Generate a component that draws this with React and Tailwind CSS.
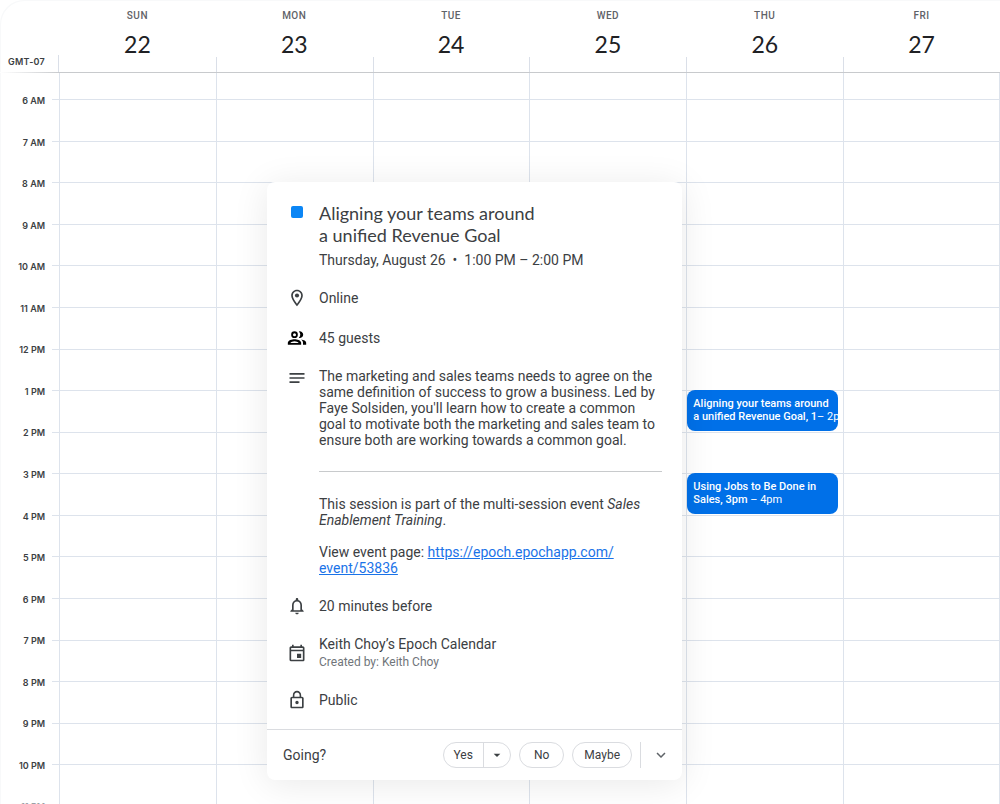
import React from 'react';
import {
  MdOutlineLocationOn,
  MdNotes,
  MdNotificationsNone,
  MdOutlineEvent,
  MdLockOutline,
  MdArrowDropDown,
  MdKeyboardArrowDown
} from 'react-icons/md';

const days = [
  { name: 'SUN', date: 22 },
  { name: 'MON', date: 23 },
  { name: 'TUE', date: 24 },
  { name: 'WED', date: 25 },
  { name: 'THU', date: 26 },
  { name: 'FRI', date: 27 }
];

const hours = [
  '6 AM', '7 AM', '8 AM', '9 AM', '10 AM', '11 AM', '12 PM', '1 PM', '2 PM',
  '3 PM', '4 PM', '5 PM', '6 PM', '7 PM', '8 PM', '9 PM', '10 PM'
];

const GuestsIcon = () => (
  <svg viewBox="0 0 24 24" className="h-5 w-5" fill="#000">
    <path
      fillRule="evenodd"
      d="M9 4a4 4 0 1 0 0 8 4 4 0 0 0 0-8zm0 2.2a1.8 1.8 0 1 1 0 3.6 1.8 1.8 0 0 1 0-3.6z"
    />
    <path d="M14.2 4.2a5.6 5.6 0 0 1 0 7.6A4 4 0 1 0 14.2 4.2z" />
    <path
      fillRule="evenodd"
      d="M9 13.5c-2.8 0-8 1.3-8 4.2V20h16v-2.300c0-2.900-5.200-4.200-8-4.200zM4 18c.8-1 3-2 5-2s4.200 1 5 2z"
    />
    <path d="M17 13.700c1.400 1 2.200 2.300 2.200 4V20H23v-2.300c0-2.200-3-3.600-6-4z" />
  </svg>
);

const DayHeader = () => (
  <header>
    <div className="flex h-[72px]">
      <div className="flex h-[17px] w-[59px] shrink-0 items-start justify-end self-end border-r border-[#dadfe8] pr-[13px] font-[Inter,sans-serif] text-[9px] leading-[13px] font-semibold tracking-wide whitespace-nowrap">
        GMT-07
      </div>
      {days.map((day, i) => (
        <div key={day.name} className="flex flex-1 flex-col items-center pt-[9px]">
          <span className="text-[10px] leading-[14px] font-medium tracking-wider text-[#5f6368]">{day.name}</span>
          <span className="mt-2 font-[Lato,sans-serif] text-[23px] leading-[26px] text-[#202124]">{day.date}</span>
          <span className={`h-[15px] w-full border-l ${i === 0 ? 'border-transparent' : 'border-[#dadfe8]'}`} />
        </div>
      ))}
    </div>
    <div className="flex h-px">
      <span className="w-[59px] bg-linear-to-r from-white to-[#c8cacd]" />
      <span className="flex-1 bg-[#c8cacd]" />
    </div>
  </header>
);

const CalendarEvent = ({ className, children }) => (
  <button
    type="button"
    className={`${className} z-10 mr-[5px] mb-px ml-px flex flex-col items-start overflow-hidden rounded-lg bg-[#0070e8] px-[6px] pt-[7px] text-left text-[11px] leading-[13px] font-medium whitespace-nowrap text-white`}
  >
    {children}
  </button>
);

const WeekGrid = () => (
  <div className="flex h-[733px]">
    <div className="mt-[7px] grid h-[748px] w-[45px] shrink-0 grid-rows-[repeat(18,minmax(0,1fr))] items-center text-right font-[Inter,sans-serif] text-[9px] font-semibold">
      {hours.map((hour) => (
        <span key={hour}>{hour}</span>
      ))}
      <span className="text-[#9aa0a6]">11 PM</span>
    </div>
    <div className="ml-[7px] grid flex-1 grid-cols-[7px_repeat(6,minmax(0,1fr))] grid-rows-[26px_repeat(17,minmax(0,1fr))]">
      {hours.map((hour, i) => (
        <div key={hour} className="col-span-full border-t border-[#dde3ec]" style={{ gridRowStart: i + 2 }} />
      ))}
      {days.map((day, i) => (
        <div
          key={day.name}
          className="row-span-full border-l border-[#dde3ec] last-of-type:border-r"
          style={{ gridColumnStart: i + 2 }}
        />
      ))}
      <CalendarEvent className="col-start-6 row-start-9">
        <span>Aligning your teams around</span>
        <span>a unified Revenue Goal, 1<span className="font-normal">– 2pm</span></span>
      </CalendarEvent>
      <CalendarEvent className="col-start-6 row-start-11">
        <span>Using Jobs to Be Done in</span>
        <span>Sales, 3pm <span className="font-normal">– 4pm</span></span>
      </CalendarEvent>
    </div>
  </div>
);

const DetailRow = ({ icon, children }) => (
  <div className="flex gap-3">
    <div className="flex w-5 shrink-0 justify-center text-xl">{icon}</div>
    <div className="flex-1">{children}</div>
  </div>
);

const EventDialog = () => (
  <section
    role="dialog"
    aria-labelledby="event-title"
    className="absolute top-[182px] left-[267px] z-20 w-[415px] rounded-lg bg-white text-sm leading-4 text-[#3c4043] shadow-[0_4px_36px_rgba(0,0,0,0.09)]"
  >
    <div className="flex flex-col gap-5 px-5 pt-5 pb-[19px]">
      <DetailRow icon={<span className="mt-1 h-3 w-3 rounded-xs bg-[#0b86f5]" />}>
        <h1 id="event-title" className="font-[Lato,sans-serif] text-lg leading-[22px]">
          Aligning your teams around
          <br />
          a unified Revenue Goal
        </h1>
        <p className="mt-[6px]">Thursday, August 26 &nbsp;•&nbsp; 1:00 PM – 2:00 PM</p>
      </DetailRow>
      <DetailRow icon={<MdOutlineLocationOn />}>
        <p className="leading-5">Online</p>
      </DetailRow>
      <DetailRow icon={<GuestsIcon />}>
        <p className="leading-5">45 guests</p>
      </DetailRow>
      <DetailRow icon={<MdNotes />}>
        <p>
          The marketing and sales teams needs to agree on the same definition of success to grow a
          business. Led by Faye Solsiden, you'll learn how to create a common goal to motivate both
          the marketing and sales team to ensure both are working towards a common goal.
        </p>
        <hr className="mt-[23px] mb-6 border-[#c8cacc]" />
        <p>
          This session is part of the multi-session event <em>Sales Enablement Training</em>.
        </p>
        <p className="mt-4">
          View event page:{' '}
          <a href="https://epoch.epochapp.com/event/53836" className="text-[#1a73e8] underline">
            https://epoch.epochapp.com/
            <wbr />
            event/53836
          </a>
        </p>
      </DetailRow>
      <DetailRow icon={<MdNotificationsNone />}>
        <p className="leading-5">20 minutes before</p>
      </DetailRow>
      <DetailRow icon={<MdOutlineEvent className="mt-[7px]" />}>
        <p>Keith Choy’s Epoch Calendar</p>
        <p className="mt-[2px] text-xs leading-4 text-[#70757a]">Created by: Keith Choy</p>
      </DetailRow>
      <DetailRow icon={<MdLockOutline />}>
        <p className="leading-5">Public</p>
      </DetailRow>
    </div>

    <footer className="flex h-[51px] items-center gap-2 border-t border-[#dadce0] pr-3 pl-4">
      <span className="mr-auto">Going?</span>
      <div className="flex h-[26px] rounded-full border border-[#dadce0] text-xs">
        <button type="button" className="px-[10px]">Yes</button>
        <button type="button" aria-label="Yes options" className="flex w-[27px] items-center justify-center border-l border-[#dadce0] text-base">
          <MdArrowDropDown />
        </button>
      </div>
      <button type="button" className="h-[26px] rounded-full border border-[#dadce0] px-[14px] text-xs">No</button>
      <button type="button" className="h-[26px] rounded-full border border-[#dadce0] px-[11px] text-xs">Maybe</button>
      <button type="button" aria-label="More options" className="flex h-[26px] items-center border-l border-[#dadce0] pl-[11px] text-lg text-[#5f6368]">
        <MdKeyboardArrowDown />
      </button>
    </footer>
  </section>
);

const App = () => {
  return (
    <main className="relative h-screen overflow-hidden rounded-tl-3xl bg-white font-[Roboto,sans-serif] text-[#3c4043] shadow-[inset_1px_1px_0_#f8f9fa]">
      <DayHeader />
      <WeekGrid />
      <EventDialog />
    </main>
  );
};

export default App;
